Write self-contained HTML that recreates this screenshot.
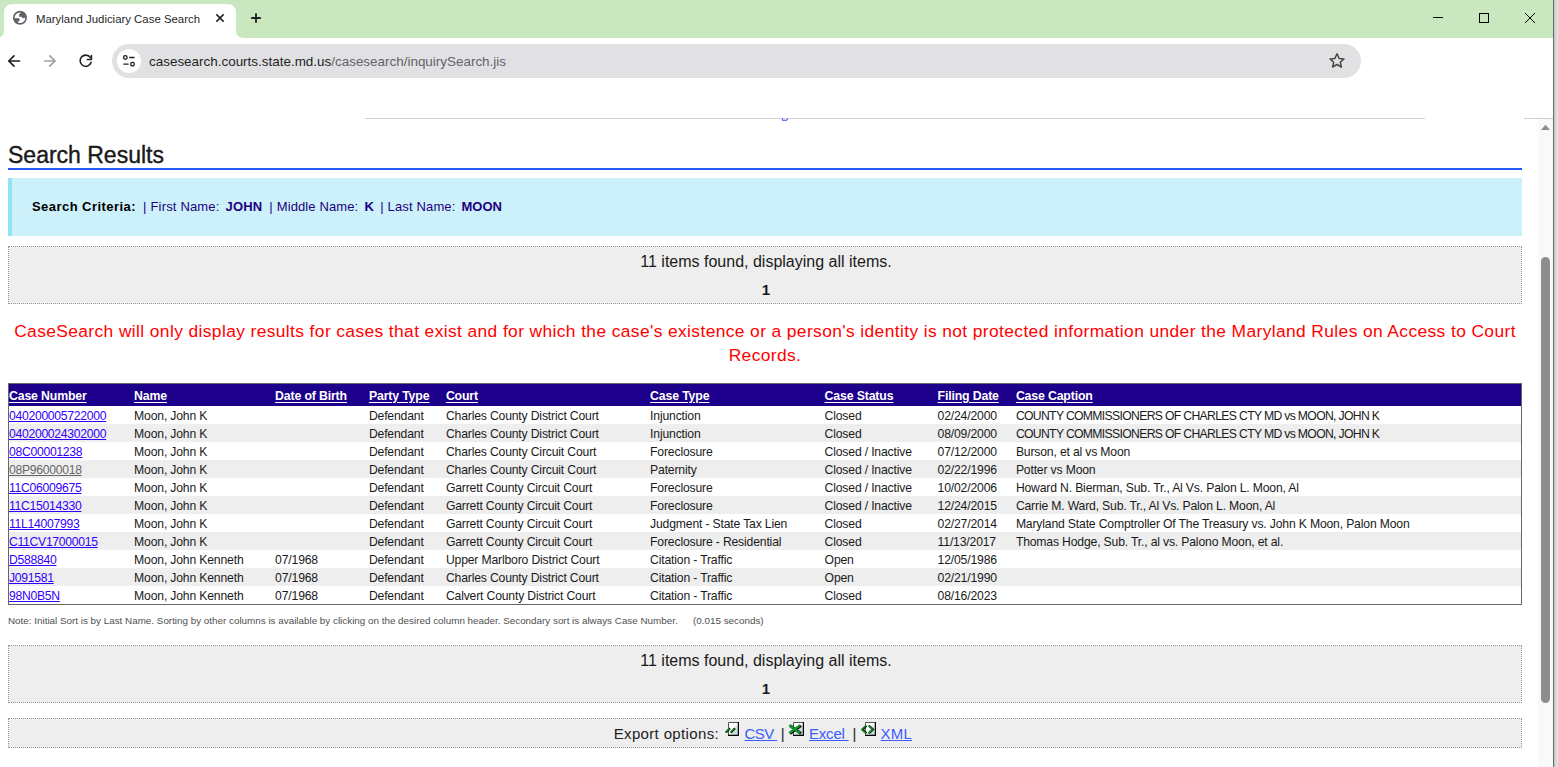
<!DOCTYPE html>
<html><head><meta charset="utf-8">
<style>
*{margin:0;padding:0;box-sizing:border-box}
html,body{width:1558px;height:767px;overflow:hidden;background:#fff;font-family:"Liberation Sans",sans-serif}
.abs{position:absolute}
#tabbar{left:0;top:0;width:1553px;height:38px;background:#c9e8c0}
#tab{left:4px;top:4px;width:232px;height:34px;background:#fff;border-radius:10px 10px 0 0}
.flare{position:absolute;bottom:0;width:8px;height:8px;background:#fff}
.flare:after{content:"";position:absolute;inset:0;background:#c9e8c0}
#tabtitle{left:36px;top:13px;font-size:11.4px;color:#1f1f1f;white-space:nowrap}
#toolbar{left:0;top:38px;width:1553px;height:47px;background:#fff}
#omni{left:112px;top:44px;width:1249px;height:34px;background:#e1e1e3;border-radius:17px}
#url{left:149px;top:54px;font-size:13.45px;color:#1f1f1f;white-space:nowrap}
#url span{color:#5f6368}
#winborder{left:1553px;top:0;width:1px;height:767px;background:#6b6b6b}
#winout{left:1554px;top:0;width:4px;height:767px;background:linear-gradient(90deg,#c4c4c4,#e8e8e8)}
#scroll{left:1538px;top:119px;width:15px;height:648px;background:#f9f9f9}
#thumb{left:1541px;top:257px;width:9px;height:446px;background:#8d8d8d;border-radius:5px}
#hdrline{left:365px;top:118px;width:1060px;height:1px;background:#d0d0d0}
#hdrline2{left:1524px;top:118px;width:29px;height:1px;background:#d0d0d0}
h1{position:absolute;left:8px;top:142px;font-size:23px;font-weight:normal;color:#1a1a1a;white-space:nowrap;-webkit-text-stroke:0.4px #1a1a1a}
#h1line{left:8px;top:168px;width:1514px;height:2px;background:#2457f5}
#crit{left:8px;top:178px;width:1514px;height:58px;background:#cdf1fa;border-left:4px solid #90e2f4}
#crittext{left:32px;top:199px;font-size:13px;color:#21007f;white-space:nowrap}
.cs{position:absolute;top:0;white-space:nowrap}
.cs.k{font-weight:bold;color:#000}
.cs.b{font-weight:bold}
.ibox{left:8px;width:1514px;background:#eeeeee;border:1px dotted #999}
#ibox1{top:246px;height:58px}
#ibox2{top:645px;height:58px}
#ebox{top:718px;height:30px}
.itext{left:0;width:1514px;text-align:center;font-size:16px;color:#1a1a1a}
.pg{left:0;width:1514px;text-align:center;font-size:15px;font-weight:bold;color:#1a1a1a}
#warn{left:8px;top:319px;width:1514px;text-align:center;font-size:17.4px;letter-spacing:0.384px;line-height:24px;color:#ff0000;white-space:nowrap}
table{position:absolute;left:8px;top:383px;width:1514px;border-collapse:separate;border-spacing:0;border:1px solid #666;font-size:12.2px;letter-spacing:-0.17px;table-layout:fixed}
th{background:#1c008c;color:#fff;text-align:left;height:22px;padding:1px 0 0 0;font-weight:bold;font-size:12.3px;letter-spacing:-0.15px}
th u{text-decoration:underline;text-underline-offset:1.5px}
td{height:18px;padding:1px 0 0 0;color:#1a1a1a;white-space:nowrap}
tr:nth-child(odd) td{background:#eeeeee}
td a{color:#3300ff;text-decoration:underline;text-underline-offset:1.2px;letter-spacing:-0.3px}
.ex{top:725px;font-size:15px;color:#222;white-space:nowrap}
.lk{color:#3b5bff;text-decoration:underline}
#note{left:8px;top:615px;font-size:9.86px;color:#505050;white-space:nowrap}
</style></head><body>
<svg class="abs" style="left:0;top:0" width="1553" height="38">
  <rect x="0" y="0" width="1553" height="38" fill="#c9e8c0"/>
  <path d="M-4,38 Q4,38 4,30 L4,13 Q4,4 13,4 L227,4 Q236,4 236,13 L236,30 Q236,38 244,38 Z" fill="#fff"/>
  <!-- globe -->
  <g transform="translate(19.97,17.77)">
    <circle r="6.15" fill="none" stroke="#5f6368" stroke-width="1.65"/>
    <path d="M1.1,-4.9 Q-0.9,-4 -0.9,-3.2 L-0.9,-1.6 Q-0.9,-0.9 0.2,-0.9 L1.2,-0.9 Q2.3,-0.7 2.6,0.3 Q3,0.7 3.6,0.5 L5.4,-0.2 L6.5,-0.3 A6.5,6.5 0 0 0 1.1,-6.4 Z" fill="#5f6368"/>
    <path d="M-6.5,0.5 L-1.6,0.5 Q-0.1,0.7 -0.1,2 Q-0.2,2.9 -1.2,3.3 Q-1.9,3.6 -2,4.6 L-2.2,6.1 A6.5,6.5 0 0 1 -6.5,0.5 Z" fill="#5f6368"/>
  </g>
  <!-- tab close -->
  <path d="M216.4,14.4 L223.6,21.6 M223.6,14.4 L216.4,21.6" stroke="#1f1f1f" stroke-width="1.5" fill="none"/>
  <!-- new tab plus -->
  <path d="M256,13.2 L256,22.8 M251.2,18 L260.8,18" stroke="#1f1f1f" stroke-width="1.8" fill="none"/>
  <!-- window controls -->
  <path d="M1433,17.5 L1443,17.5" stroke="#000" stroke-width="1" fill="none"/>
  <rect x="1479.5" y="13.5" width="9" height="9" stroke="#000" stroke-width="1" fill="none"/>
  <path d="M1525,13 L1535,23 M1535,13 L1525,23" stroke="#000" stroke-width="1" fill="none"/>
</svg>
<svg class="abs" style="left:0;top:38" width="1553" height="47">
  <!-- back -->
  <path d="M8.8,23 L19.5,23 M14,17.8 L8.8,23 L14,28.2" stroke="#1f1f1f" stroke-width="1.7" fill="none" stroke-linecap="round" stroke-linejoin="round"/>
  <!-- forward -->
  <path d="M44.7,23 L55,23 M49.8,17.8 L55,23 L49.8,28.2" stroke="#a0a0a0" stroke-width="1.7" fill="none" stroke-linecap="round" stroke-linejoin="round"/>
  <!-- reload -->
  <path d="M91.1,24.3 A5.6,5.6 0 1 1 90.2,19.3" stroke="#1f1f1f" stroke-width="1.6" fill="none" stroke-linecap="round"/>
  <path d="M91.4,17.6 L91.4,21.5 L87.5,21.5" stroke="#1f1f1f" stroke-width="1.6" fill="none" stroke-linecap="round" stroke-linejoin="round"/>
  <!-- omnibox -->
  <rect x="112" y="6" width="1249" height="34" rx="17" fill="#e1e1e3"/>
  <circle cx="129" cy="23" r="12" fill="#fff"/>
  <g stroke="#1f1f1f" stroke-width="1.3" fill="none">
    <circle cx="125.3" cy="19.5" r="1.8"/>
    <path d="M129.2,19.5 L134.5,19.5 M123.3,26.2 L128.6,26.2"/>
    <circle cx="132.5" cy="26.2" r="1.8"/>
  </g>
  <!-- star -->
  <path d="M1337,15.8 L1339.1,20.4 L1344,20.9 L1340.3,24.2 L1341.4,29 L1337,26.5 L1332.6,29 L1333.7,24.2 L1330,20.9 L1334.9,20.4 Z" stroke="#474747" stroke-width="1.5" fill="none" stroke-linejoin="round"/>
</svg>
<div id="tabtitle" class="abs">Maryland Judiciary Case Search</div>
<div id="url" class="abs">casesearch.courts.state.md.us<span>/casesearch/inquirySearch.jis</span></div>

<div id="hdrline" class="abs"></div>
<div id="hdrline2" class="abs"></div>
<div id="scroll" class="abs"></div>
<div id="thumb" class="abs"></div>
<svg class="abs" style="left:1538px;top:119px" width="15" height="15"><path d="M3,11 L12,11 L7.5,5.7 Z" fill="#8d8d8d"/></svg>
<svg class="abs" style="left:780px;top:117px" width="12" height="6"><path d="M2.3,1.5 L2.5,3.3 L6.5,3.3 L7.8,1.8" stroke="#2a5bea" stroke-width="1.1" fill="none"/></svg>
<div id="winborder" class="abs"></div>
<div id="winout" class="abs"></div>

<h1>Search Results</h1>
<div id="h1line" class="abs"></div>
<div id="crit" class="abs"></div>
<div id="crittext" class="abs">
<span class="cs k" style="left:0px;letter-spacing:0.45px">Search Criteria:</span>
<span class="cs" style="left:111px">|</span>
<span class="cs" style="left:118.5px;letter-spacing:0.17px">First Name:</span>
<span class="cs b" style="left:193.5px;letter-spacing:0.15px">JOHN</span>
<span class="cs" style="left:237.3px">|</span>
<span class="cs" style="left:244.7px;letter-spacing:0.12px">Middle Name:</span>
<span class="cs b" style="left:332.5px">K</span>
<span class="cs" style="left:348.2px">|</span>
<span class="cs" style="left:355.6px;letter-spacing:0.14px">Last Name:</span>
<span class="cs b" style="left:429.5px">MOON</span>
</div>

<div id="ibox1" class="abs ibox">
  <div class="abs itext" style="top:6px">11 items found, displaying all items.</div>
  <div class="abs pg" style="top:34px">1</div>
</div>

<div id="warn" class="abs">CaseSearch will only display results for cases that exist and for which the case's existence or a person's identity is not protected information under the Maryland Rules on Access to Court<br>Records.</div>

<table>
<colgroup><col style="width:125.1px"><col style="width:141px"><col style="width:93.8px"><col style="width:77px"><col style="width:204.2px"><col style="width:174.5px"><col style="width:113px"><col style="width:78.3px"><col></colgroup>
<tr><th><u>Case Number</u></th><th><u>Name</u></th><th><u>Date of Birth</u></th><th><u>Party Type</u></th><th><u>Court</u></th><th><u>Case Type</u></th><th><u>Case Status</u></th><th><u>Filing Date</u></th><th><u>Case Caption</u></th></tr>
<tr><td><a>040200005722000</a></td><td>Moon, John K</td><td></td><td>Defendant</td><td>Charles County District Court</td><td>Injunction</td><td>Closed</td><td>02/24/2000</td><td style="letter-spacing:-0.66px">COUNTY COMMISSIONERS OF CHARLES CTY MD vs MOON, JOHN K</td></tr>
<tr><td><a>040200024302000</a></td><td>Moon, John K</td><td></td><td>Defendant</td><td>Charles County District Court</td><td>Injunction</td><td>Closed</td><td>08/09/2000</td><td style="letter-spacing:-0.66px">COUNTY COMMISSIONERS OF CHARLES CTY MD vs MOON, JOHN K</td></tr>
<tr><td><a>08C00001238</a></td><td>Moon, John K</td><td></td><td>Defendant</td><td>Charles County Circuit Court</td><td>Foreclosure</td><td>Closed / Inactive</td><td>07/12/2000</td><td>Burson, et al vs Moon</td></tr>
<tr><td><a style="color:#666">08P96000018</a></td><td>Moon, John K</td><td></td><td>Defendant</td><td>Charles County Circuit Court</td><td>Paternity</td><td>Closed / Inactive</td><td>02/22/1996</td><td>Potter vs Moon</td></tr>
<tr><td><a>11C06009675</a></td><td>Moon, John K</td><td></td><td>Defendant</td><td>Garrett County Circuit Court</td><td>Foreclosure</td><td>Closed / Inactive</td><td>10/02/2006</td><td>Howard N. Bierman, Sub. Tr., Al Vs. Palon L. Moon, Al</td></tr>
<tr><td><a>11C15014330</a></td><td>Moon, John K</td><td></td><td>Defendant</td><td>Garrett County Circuit Court</td><td>Foreclosure</td><td>Closed / Inactive</td><td>12/24/2015</td><td>Carrie M. Ward, Sub. Tr., Al Vs. Palon L. Moon, Al</td></tr>
<tr><td><a>11L14007993</a></td><td>Moon, John K</td><td></td><td>Defendant</td><td>Garrett County Circuit Court</td><td>Judgment - State Tax Lien</td><td>Closed</td><td>02/27/2014</td><td>Maryland State Comptroller Of The Treasury vs. John K Moon, Palon Moon</td></tr>
<tr><td><a>C11CV17000015</a></td><td>Moon, John K</td><td></td><td>Defendant</td><td>Garrett County Circuit Court</td><td>Foreclosure - Residential</td><td>Closed</td><td>11/13/2017</td><td>Thomas Hodge, Sub. Tr., al vs. Palono Moon, et al.</td></tr>
<tr><td><a>D588840</a></td><td>Moon, John Kenneth</td><td>07/1968</td><td>Defendant</td><td>Upper Marlboro District Court</td><td>Citation - Traffic</td><td>Open</td><td>12/05/1986</td><td></td></tr>
<tr><td><a>J091581</a></td><td>Moon, John Kenneth</td><td>07/1968</td><td>Defendant</td><td>Charles County District Court</td><td>Citation - Traffic</td><td>Open</td><td>02/21/1990</td><td></td></tr>
<tr><td><a>98N0B5N</a></td><td>Moon, John Kenneth</td><td>07/1968</td><td>Defendant</td><td>Calvert County District Court</td><td>Citation - Traffic</td><td>Closed</td><td>08/16/2023</td><td></td></tr>
</table>

<div id="note" class="abs"><span class="cs" style="left:0">Note: Initial Sort is by Last Name. Sorting by other columns is available by clicking on the desired column header. Secondary sort is always Case Number.</span><span class="cs" style="left:685px">(0.015 seconds)</span></div>

<div id="ibox2" class="abs ibox">
  <div class="abs itext" style="top:6px">11 items found, displaying all items.</div>
  <div class="abs pg" style="top:34px">1</div>
</div>

<div id="ebox" class="abs ibox"></div>
<div class="abs ex" style="left:613.7px;letter-spacing:0.35px">Export options:</div>
<svg class="abs" style="left:720px;top:718px" width="200" height="24">
 <defs><linearGradient id="ig" x1="0" y1="0" x2="1" y2="1"><stop offset="0.45" stop-color="#fff"/><stop offset="0.55" stop-color="#d2e4e4"/><stop offset="1" stop-color="#b9cfd0"/></linearGradient></defs>
 <!-- csv -->
 <rect x="8" y="4" width="11" height="14" fill="url(#ig)"/><path d="M8.5,18 V4.5 H19" stroke="#555" stroke-width="1" fill="none"/><path d="M18.4,4 V17.4 H8" stroke="#000" stroke-width="1.2" fill="none"/>
 <path d="M6,14.6 L10,10.3 M11,14.6 L15,10.3" stroke="#111" stroke-width="2" fill="none"/>
 <path d="M5.4,14.6 L9.2,10.4 M10.4,14.6 L14.2,10.4" stroke="#118a22" stroke-width="1.5" fill="none"/>
 <!-- excel -->
 <rect x="73" y="4" width="11" height="14" fill="url(#ig)"/><path d="M73.5,18 V4.5 H84" stroke="#555" stroke-width="1" fill="none"/><path d="M83.4,4 V17.4 H73" stroke="#000" stroke-width="1.2" fill="none"/>
 <path d="M70,7.6 L81,15.5 M81,7.6 L70,15.5" stroke="#111" stroke-width="3" fill="none"/>
 <path d="M69.3,7.2 L80.2,15 M80.2,7.2 L69.3,15" stroke="#109a2a" stroke-width="2.2" fill="none"/>
 <!-- xml -->
 <rect x="145" y="4" width="11" height="14" fill="url(#ig)"/><path d="M145.5,18 V4.5 H156" stroke="#555" stroke-width="1" fill="none"/><path d="M155.4,4 V17.4 H145" stroke="#000" stroke-width="1.2" fill="none"/>
 <path d="M146.5,7.8 L142.5,11.5 L146.5,15.2 M149,7.8 L153,11.5 L149,15.2" stroke="#111" stroke-width="2.2" fill="none"/>
 <path d="M146,7.5 L141.8,11.5 L146,15.4 M148.5,7.5 L152.5,11.5 L148.5,15.4" stroke="#0d8a22" stroke-width="1.5" fill="none"/>
</svg>
<div class="abs ex lk" style="left:744.6px;letter-spacing:-0.6px">CSV&nbsp;</div>
<div class="abs ex" style="left:780.8px">|</div>
<div class="abs ex lk" style="left:809px;letter-spacing:-0.2px">Excel&nbsp;</div>
<div class="abs ex" style="left:852.6px">|</div>
<div class="abs ex lk" style="left:880.6px;letter-spacing:0.2px">XML</div>
</body></html>
